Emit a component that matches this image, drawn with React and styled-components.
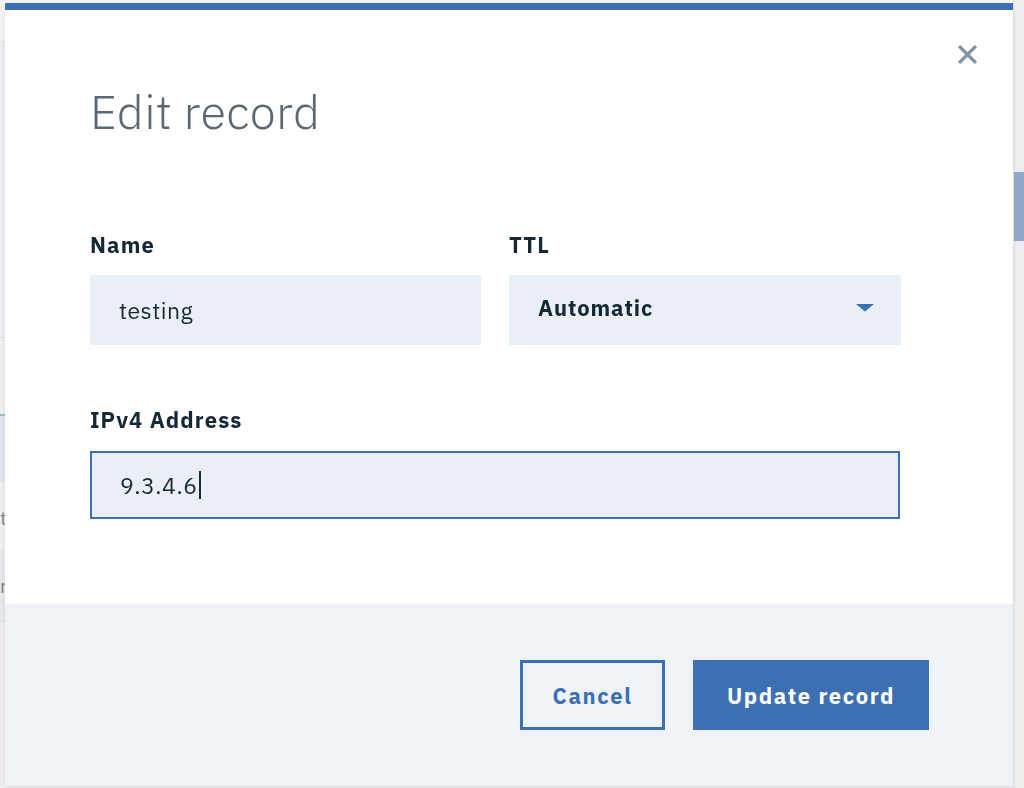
import React from "react";
import styled, { createGlobalStyle } from "styled-components";

const Global = createGlobalStyle`
  html, body { margin: 0; padding: 0; }
  body {
    width: 1024px;
    height: 788px;
    overflow: hidden;
    font-family: "IBM Plex Sans", "Open Sans", "Noto Sans", sans-serif;
    background: #eceef1;
  }
  * { box-sizing: border-box; }
`;

/* ---------- page behind the modal ---------- */
const Page = styled.div`
  display: grid;
  grid-template-columns: 1fr 11px;
  width: 1024px;
  height: 788px;
`;

const PageMain = styled.div`
  display: flex;
  flex-direction: column;
  min-width: 0;
`;

const PageHeader = styled.div`
  height: 42px;
  background: #f3f4f6;
  border-bottom: 1px solid #e2e5e8;
`;

const PageSection = styled.div`
  height: ${(p) => p.$h}px;
  background: ${(p) => p.$bg};
  border-top: ${(p) => (p.$line ? `${p.$lineW || 1}px solid ${p.$line}` : "none")};
  display: flex;
  align-items: center;
  flex: ${(p) => (p.$grow ? 1 : "none")};
`;

const RowText = styled.span`
  font-size: 19px;
  line-height: 24px;
  color: #7b858d;
  margin-top: ${(p) => p.$dy || 0}px;
`;

const ScrollTrack = styled.div`
  background: #eceef0;
  border-left: 1px solid #e4e6e9;
  display: flex;
  flex-direction: column;
`;

const ScrollThumb = styled.div`
  margin-top: 172px;
  height: 69px;
  background: #8fa9ca;
`;

/* ---------- modal ---------- */
const Modal = styled.div`
  position: fixed;
  left: 5px;
  top: 3px;
  width: 1008px;
  height: 783px;
  background: #ffffff;
  border-top: 7px solid #3d70b2;
  display: flex;
  flex-direction: column;
  box-shadow: 0 2px 6px rgba(0, 0, 0, 0.08);
`;

const Body = styled.div`
  flex: 1;
  position: relative;
  padding: 74px 112px 0 85px;
`;

const CloseButton = styled.button`
  position: absolute;
  top: 31px;
  right: 33px;
  width: 26px;
  height: 26px;
  padding: 0;
  border: none;
  background: transparent;
  display: flex;
  align-items: center;
  justify-content: center;
  cursor: pointer;
`;

const Title = styled.h1`
  margin: 0;
  font-weight: 300;
  font-size: 47px;
  line-height: 55px;
  color: #5a6872;
  letter-spacing: 0.35px;
`;

const Form = styled.div`
  margin-top: 92px;
  display: flex;
  flex-direction: column;
  gap: 61px;
`;

const Row = styled.div`
  display: grid;
  grid-template-columns: ${(p) => p.$cols};
  column-gap: 28px;
`;

const Field = styled.div`
  display: flex;
  flex-direction: column;
`;

const Label = styled.label`
  font-size: 22px;
  line-height: 28px;
  font-weight: 700;
  letter-spacing: 1.1px;
  color: #152935;
  margin-bottom: 16px;
`;

const InputBox = styled.div`
  height: ${(p) => (p.$focused ? 68 : 70)}px;
  margin-top: ${(p) => (p.$focused ? 1 : 0)}px;
  background: #eaeff6;
  border: ${(p) => (p.$focused ? "2px solid #3d70b2" : "none")};
  padding: 0 ${(p) => (p.$focused ? 28 : 29)}px ${(p) => (p.$select ? 5 : 0)}px;
  padding-right: ${(p) => (p.$select ? 27 : 29)}px;
  display: flex;
  align-items: center;
  font-size: ${(p) => (p.$bold ? 22 : 23)}px;
  letter-spacing: ${(p) => (p.$bold ? 0.9 : 0.5)}px;
  font-weight: ${(p) => (p.$bold ? 700 : 400)};
  color: #152935;
  justify-content: ${(p) => (p.$select ? "space-between" : "flex-start")};
`;

const Caret = styled.span`
  display: inline-block;
  width: 1.5px;
  height: 28px;
  background: #152935;
  margin-left: 2px;
`;

const Footer = styled.div`
  height: 182px;
  background: #eff2f6;
  display: flex;
  justify-content: flex-end;
  align-items: center;
  gap: 28px;
  padding-right: 84px;
`;

const Button = styled.button`
  height: 70px;
  padding: 0 16px;
  width: ${(p) => (p.$primary ? 236 : 145)}px;
  font-family: inherit;
  font-size: 22px;
  font-weight: 700;
  letter-spacing: 1.6px;
  background: ${(p) => (p.$primary ? "#3d70b2" : "transparent")};
  color: ${(p) => (p.$primary ? "#ffffff" : "#3d70b2")};
  border: ${(p) => (p.$primary ? "none" : "3px solid #3d70b2")};
  cursor: pointer;
`;

const CloseIcon = () => (
  <svg width="21" height="21" viewBox="0 0 20 20">
    <path d="M2 2 L18 18 M18 2 L2 18" stroke="#83939e" strokeWidth="3.2" strokeLinecap="butt" />
  </svg>
);

const DropIcon = () => (
  <svg width="18" height="8" viewBox="0 0 18 8">
    <path d="M0 0 H18 L9 7.5 Z" fill="#3d70b2" />
  </svg>
);

export default function App() {
  return (
    <>
      <Global />
      <Page>
        <PageMain>
          <PageHeader />
          <PageSection $h={295} $bg="#eceef1" />
          <PageSection $h={77} $bg="#eff0f2" $line="#dde0e4" />
          <PageSection $h={68} $bg="#e4e7eb" $line="#a6bad6" $lineW={2} />
          <PageSection $h={68} $bg="#eff0f2">
            <RowText $dy={4}>t</RowText>
          </PageSection>
          <PageSection $h={71} $bg="#e6e8eb">
            <RowText>r</RowText>
          </PageSection>
          <PageSection $grow $bg="#ededef" $line="#dcdfe3" />
        </PageMain>
        <ScrollTrack>
          <ScrollThumb />
        </ScrollTrack>
      </Page>

      <Modal role="dialog" aria-labelledby="edit-title">
        <Body>
          <CloseButton aria-label="Close">
            <CloseIcon />
          </CloseButton>
          <Title id="edit-title">Edit record</Title>
          <Form>
            <Row $cols="391px 392px">
              <Field>
                <Label>Name</Label>
                <InputBox>testing</InputBox>
              </Field>
              <Field>
                <Label>TTL</Label>
                <InputBox $bold $select>
                  <span>Automatic</span>
                  <DropIcon />
                </InputBox>
              </Field>
            </Row>
            <Row $cols="810px">
              <Field>
                <Label>IPv4 Address</Label>
                <InputBox $focused>
                  9.3.4.6
                  <Caret />
                </InputBox>
              </Field>
            </Row>
          </Form>
        </Body>
        <Footer>
          <Button>Cancel</Button>
          <Button $primary>Update record</Button>
        </Footer>
      </Modal>
    </>
  );
}
